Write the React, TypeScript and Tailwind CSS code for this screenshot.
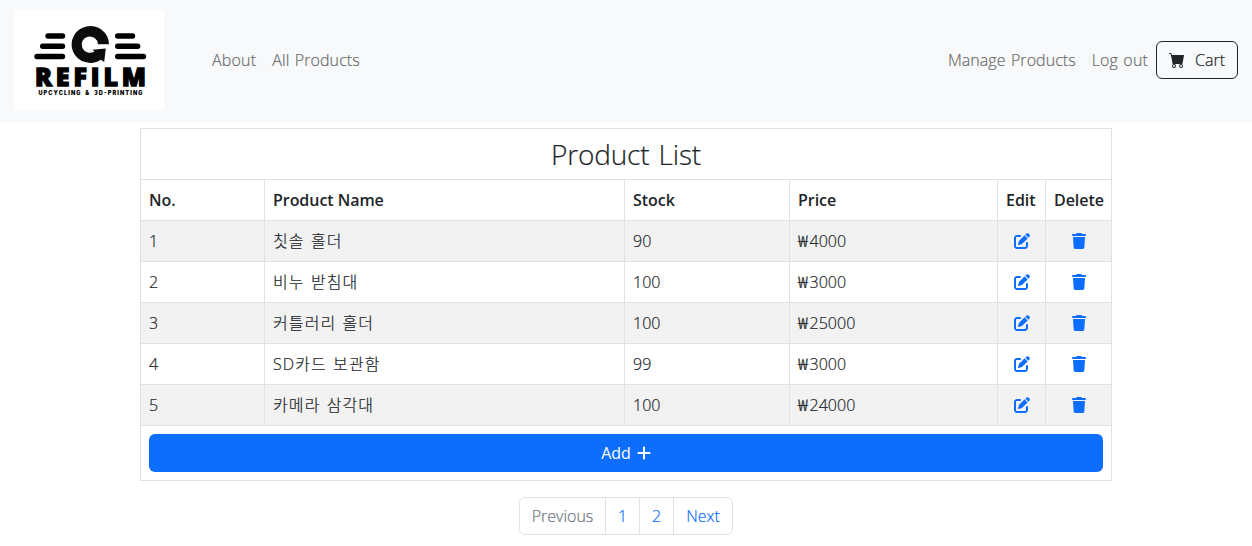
import type { ReactNode } from "react";
import { BsCartFill } from "react-icons/bs";
import { FaPenToSquare, FaPlus, FaTrash } from "react-icons/fa6";

type Product = { no: number; name: string; stock: number; price: number };

const products: Product[] = [
  { no: 1, name: "칫솔 홀더", stock: 90, price: 4000 },
  { no: 2, name: "비누 받침대", stock: 100, price: 3000 },
  { no: 3, name: "커틀러리 홀더", stock: 100, price: 25000 },
  { no: 4, name: "SD카드 보관함", stock: 99, price: 3000 },
  { no: 5, name: "카메라 삼각대", stock: 100, price: 24000 },
];

function Logo() {
  return (
    <svg width="150" height="100" viewBox="14 10 150 100" className="block bg-white" role="img" aria-label="Refilm">
      <g stroke="#000" strokeWidth="5.4" strokeLinecap="round">
        <path d="M48 36H62.5M42.7 46.2H62.5M37 56.5H62.5" />
        <path d="M117.7 36H132.5M117.7 46.2H137.7M117.7 56.5H143.5" />
      </g>
      <path
        d="M109 44.2A18.7 18.4 0 1 0 100.8 59.7L104.2 62L105.8 48.6L92.3 49.8L94.6 51.3A8.2 8.2 0 1 1 98 44.2Z"
        fill="#0c0c0c"
      />
      <text x="35" y="86" textLength="111" fontSize="25" fontFamily="'Open Sans', sans-serif" fontWeight="800" stroke="#000" strokeWidth="1.3">
        REFILM
      </text>
      <text x="38.5" y="95.3" textLength="104" fontSize="5.6" fontFamily="Inter, sans-serif" fontWeight="900" wordSpacing="1.6">
        UPCYCLING &amp; 3D-PRINTING
      </text>
    </svg>
  );
}

function Header({ children }: { children: ReactNode }) {
  return (
    <th className="border border-[#dee2e6] pr-0 pl-2 text-left font-semibold tracking-[-0.05px] [-webkit-text-stroke:0px]">
      {children}
    </th>
  );
}

function Cell({ children }: { children: ReactNode }) {
  return <td className="border border-[#dee2e6] px-2">{children}</td>;
}

export default function App() {
  return (
    <div className="h-[546px] overflow-hidden bg-white font-['Open_Sans','Noto_Sans_CJK_KR',sans-serif] text-base font-light text-[#212529] [-webkit-text-stroke:0.2px]">
      <nav className="flex h-[123px] items-center bg-[#f8f9fa] pr-3.5 pb-[3px] pl-3.5 text-[#6b6c6d]">
        <Logo />
        <div className="ml-12 flex flex-1 gap-4">
          <a className="tracking-[0.2px]">About</a>
          <a className="tracking-[0.1px] [word-spacing:1px]">All Products</a>
        </div>
        <div className="flex items-center">
          <a className="mr-4 tracking-[0.05px] [word-spacing:1.2px]">Manage Products</a>
          <a className="mr-2 tracking-[0.15px] [word-spacing:1px]">Log out</a>
          <button className="flex h-[38px] w-[82px] items-center rounded-md border border-[#212529] pl-3 text-[#212529]">
            <BsCartFill className="mr-2.5 size-4" />
            Cart
          </button>
        </div>
      </nav>
      <main className="mx-auto mt-[5px] w-[972px]">
        <table className="w-[972px] table-fixed border-collapse border border-[#dee2e6]">
          <colgroup>
            <col className="w-[124px]" />
            <col className="w-[360px]" />
            <col className="w-[165px]" />
            <col className="w-[208px]" />
            <col className="w-[48px]" />
            <col className="w-[66px]" />
          </colgroup>
          <thead>
            <tr className="h-[51px]">
              <th
                colSpan={6}
                className="border border-[#dee2e6] text-center text-[28px] leading-[34px] font-light tracking-[-0.15px] [word-spacing:2px]"
              >
                Product List
              </th>
            </tr>
            <tr className="h-[41px]">
              <Header>No.</Header>
              <Header>Product Name</Header>
              <Header>Stock</Header>
              <Header>Price</Header>
              <Header>Edit</Header>
              <Header>Delete</Header>
            </tr>
          </thead>
          <tbody>
            {products.map((p) => (
              <tr key={p.no} className="h-[41px] odd:bg-[#f2f2f2]">
                <Cell>{p.no}</Cell>
                <Cell>
                  <span className="tracking-[1.1px] [word-spacing:1px]">{p.name}</span>
                </Cell>
                <Cell>{p.stock}</Cell>
                <Cell>
                  <span className="inline-block w-[11.6px] origin-left scale-x-115">₩</span>
                  {p.price}
                </Cell>
                <Cell>
                  <FaPenToSquare className="mx-auto size-4 text-[#0d6efd]" />
                </Cell>
                <Cell>
                  <FaTrash className="mx-auto size-4 text-[#0d6efd]" />
                </Cell>
              </tr>
            ))}
          </tbody>
          <tfoot>
            <tr className="h-[55px]">
              <td colSpan={6} className="border border-[#dee2e6] px-2">
                <button className="flex h-[38px] w-full items-center justify-center gap-[5px] rounded-md bg-[#0d6efd] pl-px font-normal text-white [-webkit-text-stroke:0px]">
                  Add <FaPlus className="size-4" />
                </button>
              </td>
            </tr>
          </tfoot>
        </table>
        <div className="mt-4 flex justify-center">
          <div className="flex h-[38px] divide-x divide-[#dee2e6] rounded-md border border-[#dee2e6] text-[#0d6efd]">
            <span className="flex w-[86px] items-center justify-center text-[#6c757d]">Previous</span>
            <span className="flex w-[34px] items-center justify-center">1</span>
            <span className="flex w-[34px] items-center justify-center">2</span>
            <span className="flex w-[58px] items-center justify-center">Next</span>
          </div>
        </div>
      </main>
    </div>
  );
}
